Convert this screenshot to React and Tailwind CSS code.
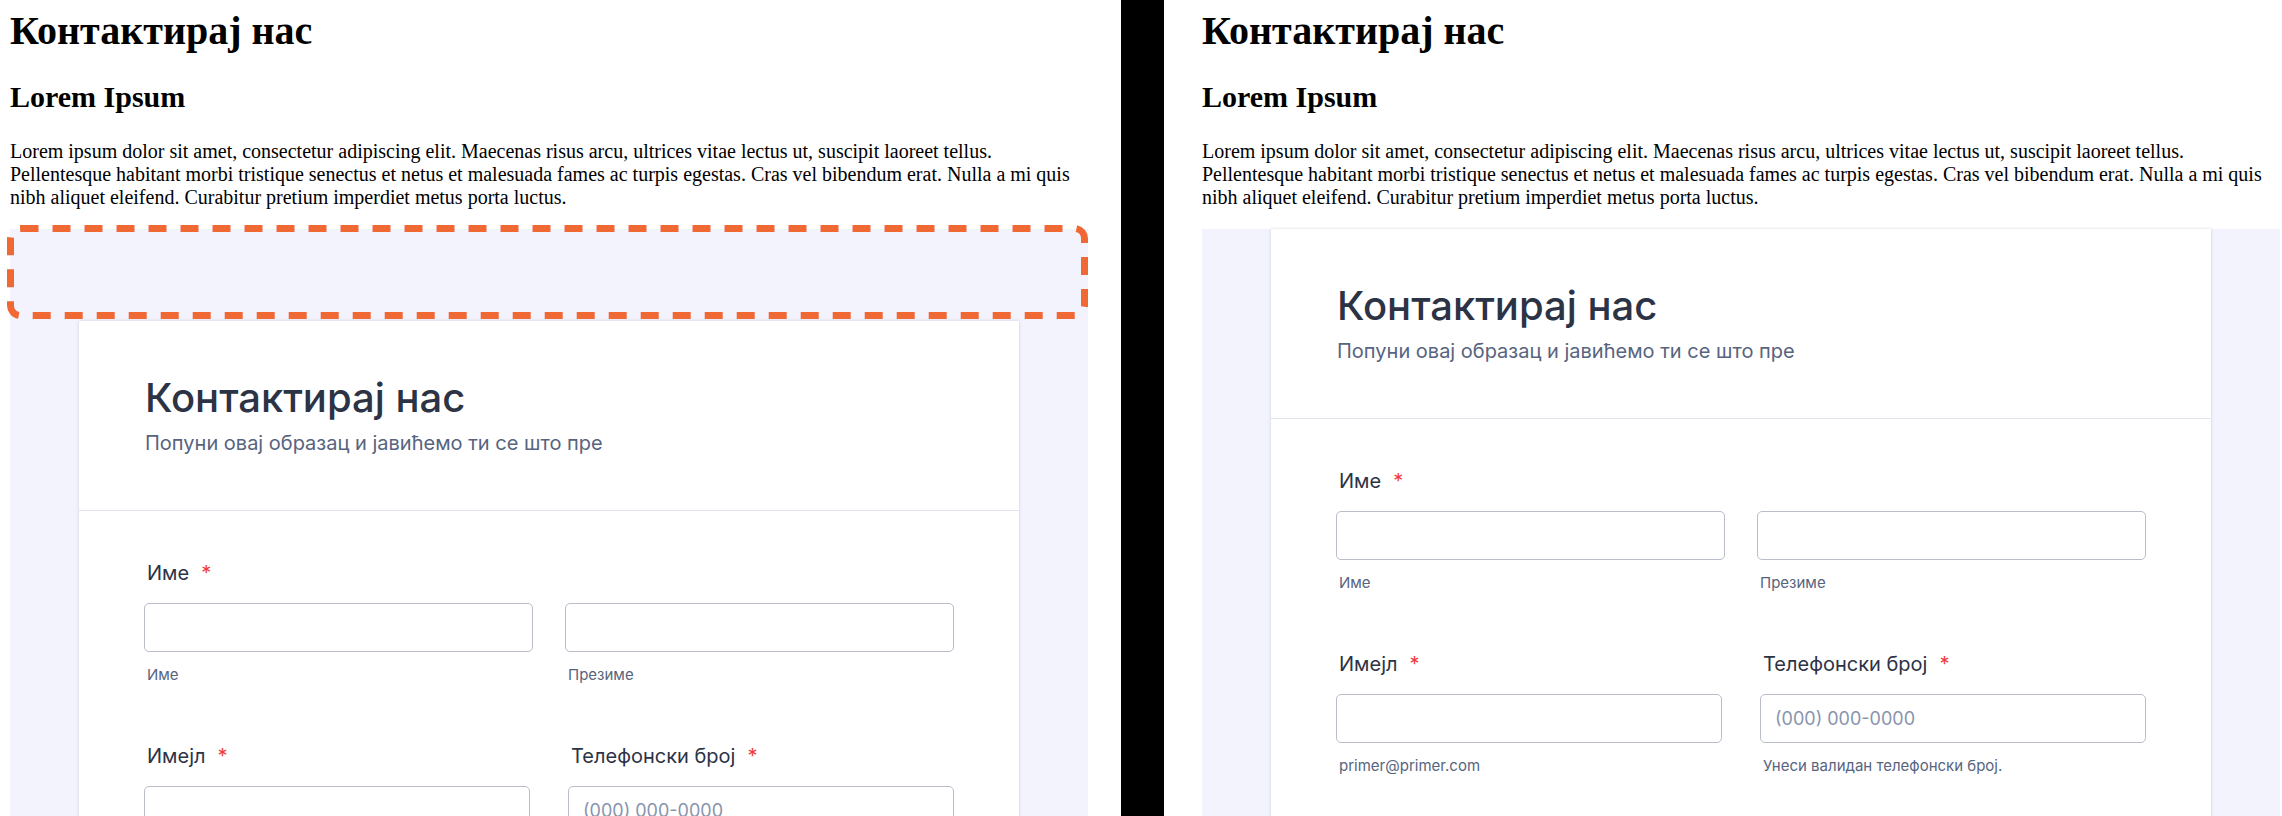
import React from 'react';

const loremText =
  'Lorem ipsum dolor sit amet, consectetur adipiscing elit. Maecenas risus arcu, ultrices vitae lectus ut, suscipit laoreet tellus. Pellentesque habitant morbi tristique senectus et netus et malesuada fames ac turpis egestas. Cras vel bibendum erat. Nulla a mi quis nibh aliquet eleifend. Curabitur pretium imperdiet metus porta luctus.';

function Label({ children }) {
  return (
    <div className="text-[20px] leading-[24px] font-normal text-[#2c3345]">
      {children}
      <span className="ml-[12px] text-[#f23a3c]">*</span>
    </div>
  );
}

function Field({ placeholder }) {
  return (
    <div className="h-[49px] rounded-[5px] border border-[#b8bdc9] bg-white flex items-center px-[14px]">
      {placeholder && <span className="text-[18px] text-[#8894ab]">{placeholder}</span>}
    </div>
  );
}

function SubLabel({ children }) {
  return <div className="mt-[14px] pl-[3px] text-[15px] leading-[18px] text-[#57647e]">{children}</div>;
}

function FormCard() {
  return (
    <div className="mx-auto w-[940px] bg-white shadow-[0_0_3px_rgba(87,100,126,0.25)] font-['Inter',sans-serif]">
      {/* header */}
      <div className="px-[66px] pt-[53px] pb-[55px] border-b border-[#e3e3ee]">
        <div className="text-[40px] leading-[48px] font-medium text-[#2c3345]">Контактирај нас</div>
        <div className="mt-[9px] text-[20px] leading-[24px] text-[#57647e]">Попуни овај образац и јавићемо ти се што пре</div>
      </div>

      <div className="px-[65px] pt-[50px] pb-[60px]">
        {/* ime / prezime */}
        <div className="pl-[3px]">
          <Label>Име</Label>
        </div>
        <div className="mt-[18px] grid grid-cols-2 gap-x-[32px]">
          <div>
            <Field />
            <SubLabel>Име</SubLabel>
          </div>
          <div>
            <Field />
            <SubLabel>Презиме</SubLabel>
          </div>
        </div>

        {/* imejl / telefon */}
        <div className="mt-[60px] flex justify-between">
          <div className="w-[386px]">
            <div className="pl-[3px]">
              <Label>Имејл</Label>
            </div>
            <div className="mt-[18px]">
              <Field />
            </div>
            <SubLabel>primer@primer.com</SubLabel>
          </div>
          <div className="w-[386px]">
            <div className="pl-[3px]">
              <Label>Телефонски број</Label>
            </div>
            <div className="mt-[18px]">
              <Field placeholder="(000) 000-0000" />
            </div>
            <SubLabel>Унеси валидан телефонски број.</SubLabel>
          </div>
        </div>
      </div>
    </div>
  );
}

function EmbedPage({ highlight }) {
  return (
    <div className="w-[1078px] shrink-0 pt-[7.5px] font-['Liberation_Serif','Times_New_Roman',serif] text-black">
      <h1 className="text-[40px] leading-[46px] font-bold">Контактирај нас</h1>
      <h2 className="mt-[26.8px] text-[30px] leading-[34.5px] font-bold">Lorem Ipsum</h2>
      <p className="mt-[24.9px] text-[20px] leading-[23px]">{loremText}</p>

      <div className="relative mt-[20px] bg-[#f3f3fe]">
        {/* form body, the highlighted one still has its top gap */}
        <div className={highlight ? 'pt-[92px]' : ''}>
          <FormCard />
        </div>

        {highlight && (
          <svg
            className="absolute left-[-3px] top-[-4px]"
            width="1081"
            height="94"
            viewBox="0 0 1081 94"
            fill="none"
          >
            <rect
              x="3.5"
              y="3.5"
              width="1074"
              height="87"
              rx="10"
              stroke="#f06834"
              strokeWidth="7"
              strokeDasharray="18 14"
            />
          </svg>
        )}
      </div>
    </div>
  );
}

export default function App() {
  return (
    <div className="flex h-[816px] w-[2282px] overflow-hidden bg-white">
      <div className="w-[1121px] shrink-0 pl-[10px] overflow-hidden">
        <EmbedPage highlight />
      </div>
      <div className="w-[43px] shrink-0 bg-black" />
      <div className="flex-1 pl-[38px] overflow-hidden">
        <EmbedPage />
      </div>
    </div>
  );
}
